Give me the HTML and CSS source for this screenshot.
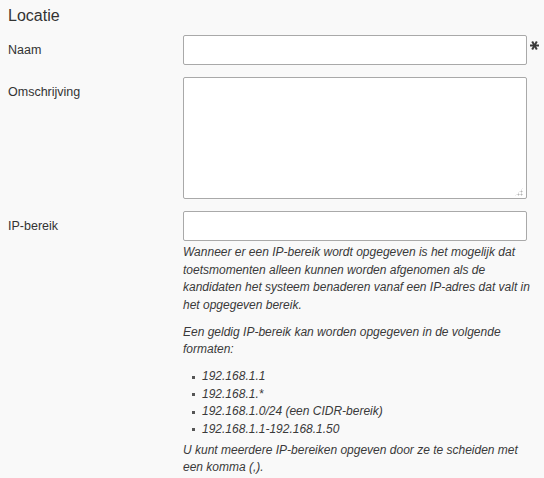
FILE: index.html
```html
<!DOCTYPE html>
<html lang="nl">
<head>
    <meta charset="UTF-8">
    <meta name="viewport" content="width=device-width, initial-scale=1.0">
    <title>Locatie</title>
    <link rel="stylesheet" href="styles.css">
</head>
<body>
    <div class="locatie-form">
        <h2>Locatie</h2>

        <div class="form-row">
            <label for="naam">Naam</label>
            <div class="field">
                <div class="field-line">
                    <input type="text" id="naam" name="naam">
                    <span class="required" title="Verplicht">
                        <svg width="9" height="9" viewBox="0 0 9 9">
                            <g stroke="#3a3a3a" stroke-width="2" stroke-linecap="butt">
                                <line x1="0" y1="4.5" x2="9" y2="4.5"/>
                                <line x1="2.2" y1="0.5" x2="6.8" y2="8.5"/>
                                <line x1="6.8" y1="0.5" x2="2.2" y2="8.5"/>
                            </g>
                        </svg>
                    </span>
                </div>
            </div>
        </div>

        <div class="form-row">
            <label for="omschrijving">Omschrijving</label>
            <div class="field">
                <div class="textarea-wrap">
                    <textarea id="omschrijving" name="omschrijving"></textarea>
                </div>
            </div>
        </div>

        <div class="form-row">
            <label for="ipbereik">IP-bereik</label>
            <div class="field">
                <input type="text" id="ipbereik" name="ipbereik">
                <div class="help">
                    <p>Wanneer er een IP-bereik wordt opgegeven is het mogelijk dat toetsmomenten alleen kunnen worden afgenomen als de kandidaten het systeem benaderen vanaf een IP-adres dat valt in het opgegeven bereik.</p>
                    <p>Een geldig IP-bereik kan worden opgegeven in de volgende formaten:</p>
                    <ul>
                        <li>192.168.1.1</li>
                        <li>192.168.1.*</li>
                        <li>192.168.1.0/24 (een CIDR-bereik)</li>
                        <li>192.168.1.1-192.168.1.50</li>
                    </ul>
                    <p>U kunt meerdere IP-bereiken opgeven door ze te scheiden met een komma (,).</p>
                </div>
            </div>
        </div>
    </div>
</body>
</html>
```

FILE: styles.css
```css
* {
    margin: 0;
    padding: 0;
    box-sizing: border-box;
}

body {
    font-family: "Liberation Sans", Arial, sans-serif;
    font-size: 12px;
    color: #333;
    background-color: #f9f9f9;
}

.locatie-form {
    padding: 6px 0 0 8px;
}

.locatie-form h2 {
    font-size: 16px;
    font-weight: normal;
    line-height: 20px;
    margin-bottom: 9px;
}

.form-row {
    display: grid;
    grid-template-columns: 175px 1fr;
    margin-bottom: 12px;
}

.form-row label {
    padding-top: 7px;
    font-size: 12.5px;
    line-height: 17.5px;
}

.field-line {
    display: flex;
    align-items: flex-start;
}

input,
textarea {
    display: block;
    width: 344px;
    background-color: #fff;
    border: 1px solid #a9a9a9;
    border-radius: 2px;
    font-family: inherit;
    font-size: 12px;
    padding: 4px 6px;
}

input {
    height: 30px;
}

textarea {
    height: 122px;
    resize: none;
}

/* dotted resize grip in the bottom right corner */
.textarea-wrap {
    position: relative;
    width: 344px;
}

.textarea-wrap::after {
    content: "";
    position: absolute;
    right: 4px;
    bottom: 3px;
    width: 8px;
    height: 8px;
    background-image: radial-gradient(circle, #b5b5b5 0.9px, transparent 1.1px);
    background-size: 3px 3px;
    background-position: right bottom;
    clip-path: polygon(100% 0, 100% 100%, 0 100%);
    pointer-events: none;
}

.required {
    display: block;
    margin: 6px 0 0 3px;
    line-height: 0;
}

.help {
    max-width: 356px;
    margin-top: 3px;
    font-style: italic;
    line-height: 17.5px;
    color: #3a3a3a;
}

.help p {
    margin-bottom: 9.5px;
}

.help ul {
    list-style: none;
    margin-bottom: 3.5px;
}

.help li {
    position: relative;
    padding-left: 19px;
}

.help li::before {
    content: "";
    position: absolute;
    left: 9px;
    top: 7.5px;
    width: 3px;
    height: 3px;
    background-color: #555;
}
```
